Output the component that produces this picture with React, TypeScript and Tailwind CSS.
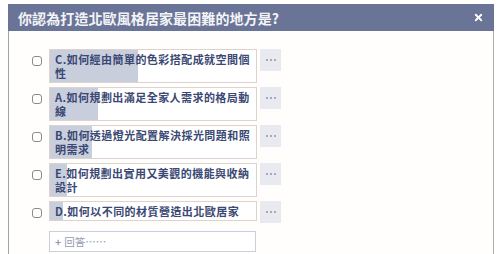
import { X } from "lucide-react";

const options = [
  { lines: ["C.如何經由簡單的色彩搭配成就空間個", "性"], fill: 88 },
  { lines: ["A.如何規劃出滿足全家人需求的格局動", "線"], fill: 48 },
  { lines: ["B.如何透過燈光配置解決採光問題和照", "明需求"], fill: 42 },
  { lines: ["E.如何規劃出實用又美觀的機能與收納", "設計"], fill: 17 },
  { lines: ["D.如何以不同的材質營造出北歐居家"], fill: 13 },
];

export default function App() {
  return (
    <div
      className="w-[500px] h-[254px] overflow-hidden bg-white"
      style={{ fontFamily: '"Noto Sans CJK TC", "Noto Sans", sans-serif' }}
    >
      <div className="ml-[8px] mt-[4px] w-[486px] h-[250px] flex flex-col">
        <div className="h-[27px] bg-[#6a7497] flex items-center justify-between pl-[10px] pr-[10px] shrink-0">
          <span className="text-[14px] leading-[16px] font-bold text-[#f3f4f8] tracking-[0.1px]">
            你認為打造北歐風格居家最困難的地方是?
          </span>
          <X size={11} strokeWidth={4} className="text-white" />
        </div>
        <div className="flex-1 bg-[#fffefd] border-l border-r border-l-[#a3a3a3] border-r-[#b3a9a6] pt-[18px] pl-[23px] flex flex-col gap-[4px]">
          {options.map((o, i) => (
            <div key={i} className="flex items-start">
              <div className="mt-[7px] w-[10px] h-[10px] rounded-[3px] border-[1.5px] border-[#8a8a8a] bg-white shrink-0" />
              <div className="ml-[7px] w-[208px] border border-[#dcd3cf] bg-white relative overflow-hidden shrink-0">
                <div
                  className="absolute left-0 top-0 bottom-0 bg-[#c8cedc]"
                  style={{ width: o.fill }}
                />
                <div className="relative pl-[5px] pr-[2px] py-[2px] text-[11px] leading-[14px] font-bold text-[#3a4873] tracking-[0.45px]">
                  {o.lines.map((l, j) => (
                    <div key={j} className="whitespace-nowrap">
                      {l}
                    </div>
                  ))}
                </div>
              </div>
              <div className="ml-[3px] w-[21px] h-[22px] bg-[#e9eaef] flex items-center justify-center gap-[2px] shrink-0">
                <span className="w-[2px] h-[2px] rounded-full bg-[#8d95ad]" />
                <span className="w-[2px] h-[2px] rounded-full bg-[#8d95ad]" />
                <span className="w-[2px] h-[2px] rounded-full bg-[#8d95ad]" />
              </div>
            </div>
          ))}
          <div className="mt-[4px] ml-[17px] w-[207px] h-[21px] border border-[#c8d0de] bg-white flex items-center pl-[5px] text-[10.5px] text-[#949bb0]">
            <span className="font-bold mr-[3px]">+</span>
            <span>回答……</span>
          </div>
        </div>
      </div>
    </div>
  );
}
